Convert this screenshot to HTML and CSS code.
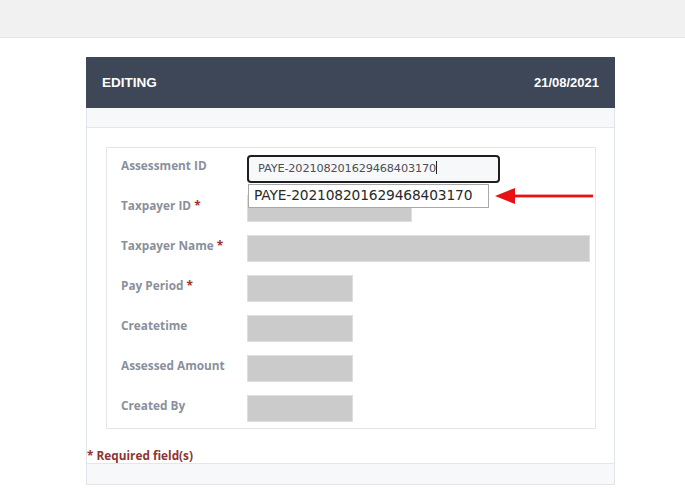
FILE: index.html
```html
<!DOCTYPE html>
<html>
<head>
<meta charset="utf-8">
<link rel="stylesheet" href="styles.css">
</head>
<body>
<div class="topbar"></div>
<div class="card">
  <div class="card-head">
    <span class="title">EDITING</span>
    <span class="date">21/08/2021</span>
  </div>
  <div class="strip"></div>
  <div class="card-body">
    <div class="fieldset">
      <div class="row top">
        <div class="label">Assessment ID</div>
        <div class="field">
          <div class="input active">PAYE-202108201629468403170<span class="caret"></span></div>
          <div class="suggest">PAYE-202108201629468403170</div>
          <svg class="arrow" width="100" height="18" viewBox="0 0 100 18"><polygon points="0,9 20,1 20,17" fill="#e81212"/><rect x="18" y="7.6" width="80" height="2.8" fill="#e81212"/></svg>
        </div>
      </div>
      <div class="row">
        <div class="label">Taxpayer ID <span class="req">*</span></div>
        <div class="field"><div class="box w165"></div></div>
      </div>
      <div class="row">
        <div class="label">Taxpayer Name <span class="req">*</span></div>
        <div class="field"><div class="box w343"></div></div>
      </div>
      <div class="row">
        <div class="label">Pay Period <span class="req">*</span></div>
        <div class="field"><div class="box w106"></div></div>
      </div>
      <div class="row">
        <div class="label">Createtime</div>
        <div class="field"><div class="box w106"></div></div>
      </div>
      <div class="row">
        <div class="label">Assessed Amount</div>
        <div class="field"><div class="box w106"></div></div>
      </div>
      <div class="row">
        <div class="label">Created By</div>
        <div class="field"><div class="box w106"></div></div>
      </div>
    </div>
    <div class="required">* Required field(s)</div>
  </div>
  <div class="strip foot"></div>
</div>
</body>
</html>
```
FILE: styles.css
```css
html, body { margin: 0; padding: 0; background: #fff; }
body { font-family: "Open Sans", "Liberation Sans", sans-serif; }
.topbar { height: 37px; background: #f1f1f1; border-bottom: 1px solid #e3e7ed; }
.card { margin: 19px 0 0 86px; width: 527px; border: 1px solid #e0e5ec; border-top: none; }
.card-head { height: 51px; background: #3d4757; display: flex; justify-content: space-between; align-items: center; padding: 0 16px 0 16px; font-family: "Liberation Sans", Arial, sans-serif; font-weight: bold; font-size: 13px; color: #fff; margin-left: -1px; margin-right: -1px; }
.card-head .title { font-size: 13.5px; }
.strip { height: 19px; background: #f7f8fa; border-bottom: 1px solid #e3e7ed; }
.strip.foot { border-top: 1px solid #e3e7ed; border-bottom: none; height: 20px; }
.card-body { padding: 19px 18px 0 19px; }
.fieldset { border: 1px solid #e3e7ed; padding: 7px 0 6px 14px; }
.row { display: flex; height: 40px; }
.row:last-child { height: 27px; }
.label { width: 126px; font-size: 11.8px; font-weight: bold; color: #8a909b; padding-top: 3px; line-height: 15px; }
.req { color: #9b3030; }
.field { position: relative; flex: 1; }
.row.top .field { z-index: 2; }
.box { height: 25px; background: #cbcbcb; border: 1px solid #dedede; }
.w165 { width: 163px; }
.w343 { width: 341px; }
.w106 { width: 104px; }
.input { box-sizing: border-box; width: 253px; height: 28px; border: 2px solid #1e1e1e; border-radius: 4px; background: #f7f8fa; font-family: "DejaVu Sans", sans-serif; font-size: 11.3px; color: #4a4f58; line-height: 24px; padding-left: 9px; letter-spacing: -0.15px; }
.caret { display: inline-block; width: 1px; height: 13px; background: #222; vertical-align: -2px; }
.suggest { position: absolute; left: 1px; top: 29px; box-sizing: border-box; width: 241px; height: 24px; background: #fff; border: 1px solid #a9a9a9; font-family: "DejaVu Sans", sans-serif; font-size: 13.8px; line-height: 21px; color: #2a2a2a; padding-left: 5px; letter-spacing: -0.15px; }
.arrow { position: absolute; left: 248px; top: 32px; }
.required { font-size: 11.8px; font-weight: bold; color: #8e3434; padding: 19px 0 0 0; margin-left: -19px; height: 15px; line-height: 15px; }
```
